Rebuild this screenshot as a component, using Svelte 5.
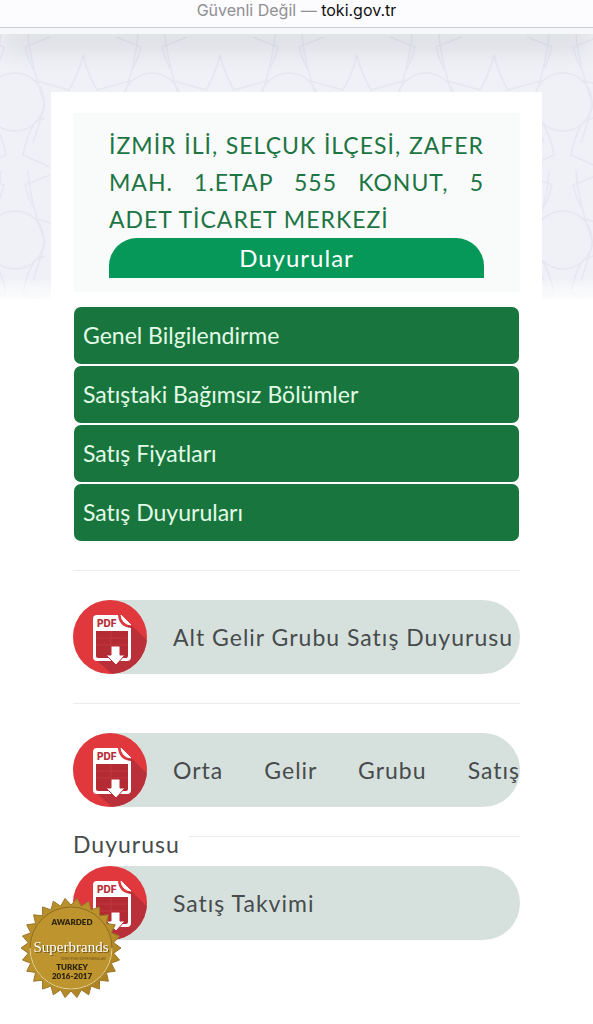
<script lang="ts">
  const sections = [
    "Genel Bilgilendirme",
    "Satıştaki Bağımsız Bölümler",
    "Satış Fiyatları",
    "Satış Duyuruları",
  ];

  const documents = [
    { title: "Alt Gelir Grubu Satış Duyurusu", short: false },
    { title: "Orta Gelir Grubu Satış Duyurusu", short: false },
    { title: "Satış Takvimi", short: true },
  ];

  const teeth = 26;
  const sealPoints = Array.from({ length: teeth * 2 }, (_, i) => {
    const r = i % 2 ? 43 : 50;
    const a = (Math.PI * i) / teeth;
    return `${(50 + r * Math.cos(a)).toFixed(1)},${(50 + r * Math.sin(a)).toFixed(1)}`;
  }).join(" ");
</script>

<header class="address">
  <span class="warning">Güvenli Değil —</span> toki.gov.tr
</header>

<div class="page">
  <svg class="backdrop" aria-hidden="true">
    <defs>
      <g id="half">
        <path d="M87 47 L123 57 Q133 40 137 22" />
        <path d="M82 0 Q84 30 99 72 L87 110" />
        <path d="M99 85 L89 89 Q80 104 77 122 L104 134" />
        <path d="M104 4 L79 14 Q82 26 87 36" />
      </g>
      <pattern id="stars" x="-54" y="5" width="137" height="138" patternUnits="userSpaceOnUse">
        <g fill="none" stroke="#e6e7ef" stroke-width="1.5">
          <circle cx="69" cy="69" r="29" />
          <use href="#half" />
          <use href="#half" transform="translate(137 0) scale(-1 1)" />
        </g>
      </pattern>
      <linearGradient id="fade" x1="0" y1="0" x2="0" y2="1">
        <stop offset="0.92" stop-color="#fff" stop-opacity="0" />
        <stop offset="0.96" stop-color="#fff" stop-opacity="0.5" />
        <stop offset="1" stop-color="#fff" stop-opacity="0.8" />
      </linearGradient>
    </defs>
    <rect width="100%" height="100%" fill="#eff1f6" />
    <rect width="100%" height="100%" fill="url(#stars)" />
    <rect width="100%" height="100%" fill="url(#fade)" />
  </svg>

  <main class="card">
    <div class="intro">
      <h1>İZMİR İLİ, SELÇUK İLÇESİ, ZAFER MAH. 1.ETAP 555 KONUT, 5 ADET TİCARET MERKEZİ</h1>
      <h2>Duyurular</h2>
    </div>

    <nav class="sections">
      {#each sections as section}
        <button type="button">{section}</button>
      {/each}
    </nav>

    {#each documents as doc}
      <hr class:indent={doc.short} />
      <a class="document" href="#pdf">
        <svg class="pdf" viewBox="0 0 74 74" aria-hidden="true">
          <clipPath id="disc"><circle cx="37" cy="37" r="37" /></clipPath>
          <g clip-path="url(#disc)">
            <rect width="74" height="74" fill="#e0383d" />
            <path d="M57 24 L80 46 V80 H46 L22 59 Z" fill="#b9303a" />
          </g>
          <path d="M24 15 H45 Q46 27 58 28 V57 Q58 61 54 61 H24 Q20 61 20 57 V19 Q20 15 24 15 Z" fill="#fff" />
          <path d="M23 31 H55 V56 Q55 58 53 58 H25 Q23 58 23 56 Z" fill="#b52b34" />
          <path d="M24 38 H54 M24 45 H54 M38 31 V57" stroke="#c2363f" />
          <path d="M48 15 L58 25 Q49 24 48 15 Z" fill="#fff" stroke="#fff" stroke-linejoin="round" />
          <text x="24" y="27">PDF</text>
          <path d="M38 46 H47 V55 H52 L43 65 L33 55 H38 Z" fill="#fff" stroke="#b52b34" />
        </svg>{doc.title}
      </a>
    {/each}
  </main>
</div>

<svg class="seal" viewBox="0 0 100 100" role="img" aria-label="Superbrands">
  <defs>
    <linearGradient id="gold" x1="0" y1="0" x2="1" y2="1">
      <stop offset="0" stop-color="#b68d2b" />
      <stop offset="0.5" stop-color="#bd932c" />
      <stop offset="1" stop-color="#a67a1e" />
    </linearGradient>
  </defs>
  <polygon points={sealPoints} fill="url(#gold)" stroke="#97762a" />
  <circle cx="50" cy="50" r="41" fill="#bd942e" stroke="#8d6d20" />
  <path d="M9 50 A41 41 0 0 0 91 50" fill="none" stroke="#e9d795" />
  <g text-anchor="middle">
    <text class="caps" x="51" y="27">AWARDED</text>
    <text class="brand" x="50" y="54">Superbrands</text>
    <text class="tiny" x="62" y="62">TÜRKİYE'NİN SÜPERMARKALARI</text>
    <text class="caps" x="51" y="72">TURKEY</text>
    <text class="caps" x="51" y="81">2016-2017</text>
  </g>
</svg>

<style>
  :global(body) {
    margin: 0;
    background: #fff;
    font-family: Lato, "Open Sans", sans-serif;
    font-variant-ligatures: none;
  }

  .address {
    position: relative;
    z-index: 1;
    padding-bottom: 7px;
    border-bottom: 1px solid #cccbd6;
    background: #fcfbfd;
    box-shadow: 0 6px 0 #f6f7f9, 0 24px 26px -4px rgba(60, 65, 70, 0.14);
    color: #111;
    font: 16px/20px Inter, sans-serif;
    text-align: center;
  }
  .warning {
    color: #8f8f94;
  }

  .page {
    position: relative;
    padding: 64px 51px 84px;
  }
  .backdrop {
    position: absolute;
    top: 0;
    left: 0;
    width: 100%;
    height: 271px;
  }

  .card {
    position: relative;
    padding: 21px 22px 0;
    background: #fff;
  }

  .intro {
    padding: 14px 36px;
    background: #f9fafa;
  }
  h1 {
    margin: 0;
    color: #1c7543;
    font-size: 23px;
    font-weight: 400;
    line-height: 37px;
    letter-spacing: 1px;
    text-align: justify;
  }
  h2 {
    margin: 0;
    border-radius: 28px 28px 0 0;
    background: #059859;
    color: #fff;
    font-size: 24px;
    font-weight: 400;
    line-height: 40px;
    letter-spacing: 1px;
    text-align: center;
  }

  .sections {
    display: grid;
    gap: 2px;
    margin: 15px 1px 28px;
  }
  .sections button {
    height: 57px;
    padding: 0 9px 2px;
    border: 0;
    border-radius: 7px;
    background: #18753d;
    color: #e2fbe6;
    font: inherit;
    font-size: 23px;
    text-align: left;
  }

  hr {
    height: 1px;
    margin: 29px 0;
    border: 0;
    background: #ececec;
  }
  hr.indent {
    margin-left: 116px;
  }

  .document {
    display: block;
    height: 74px;
    border-radius: 37px;
    background: #d6e1de;
    color: #474b4b;
    font-size: 23px;
    line-height: 74px;
    letter-spacing: 1px;
    text-align: justify;
    text-decoration: none;
  }
  .pdf {
    width: 74px;
    height: 74px;
    margin-right: 26px;
    vertical-align: top;
  }
  .pdf text {
    fill: #b9303a;
    font: 800 10px Inter, sans-serif;
    letter-spacing: 0;
  }

  .seal {
    position: fixed;
    bottom: 26px;
    left: 21px;
    z-index: 2;
    width: 100px;
    height: 100px;
  }
  .caps {
    fill: #2e240c;
    font: 800 8px Lato, sans-serif;
  }
  .brand {
    fill: #fff;
    font: 15px "Liberation Serif", serif;
    text-shadow: 1px 1px 0 #6f551a;
  }
  .tiny {
    fill: #6f551a;
    font: 3px Lato, sans-serif;
  }
</style>
